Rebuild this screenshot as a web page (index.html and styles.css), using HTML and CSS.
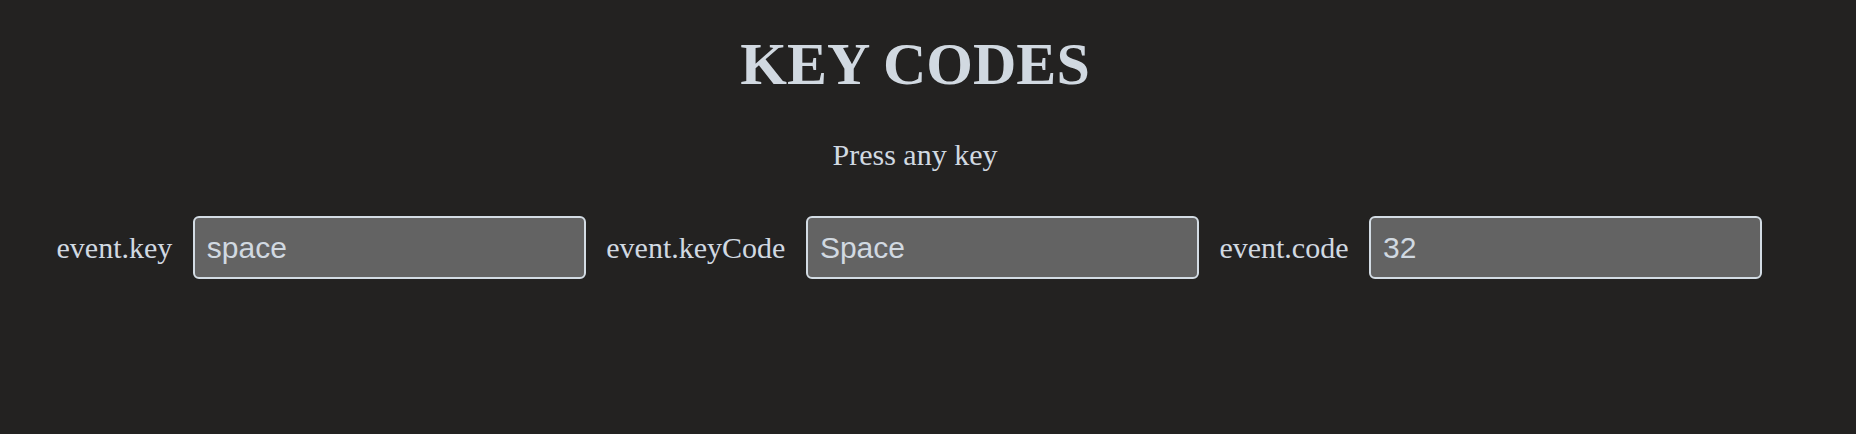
FILE: index.html
```html
<!DOCTYPE html>
<html lang="en">
<head>
<meta charset="utf-8">
<title>Key Codes</title>
<link rel="stylesheet" href="styles.css">
</head>
<body>
<main class="page">
  <h1 class="title">KEY CODES</h1>
  <p class="hint">Press any key</p>
  <div class="fields">
    <label class="field-label" for="k">event.key</label>
    <input class="field-input" id="k" type="text" value="space">
    <label class="field-label" for="kc">event.keyCode</label>
    <input class="field-input" id="kc" type="text" value="Space">
    <label class="field-label" for="c">event.code</label>
    <input class="field-input" id="c" type="text" value="32">
  </div>
</main>
</body>
</html>
```
FILE: styles.css
```css
html, body {
  margin: 0;
  padding: 0;
  background: #232221;
  height: 100%;
}
.page {
  box-sizing: border-box;
  padding: 34px 26px 0 0;
  color: #d1d9e1;
  font-family: "Liberation Serif", "Times New Roman", serif;
}
.title {
  margin: 0;
  text-align: center;
  font-size: 60px;
  line-height: 60px;
  font-weight: bold;
  color: #d1d9e1;
}
.hint {
  margin: 46px 0 0;
  text-align: center;
  font-size: 30px;
  line-height: 30px;
}
.fields {
  display: flex;
  align-items: center;
  gap: 20.5px;
  margin-top: 46px;
  padding-left: 56.5px;
}
.field-label {
  font-size: 30px;
  line-height: normal;
  color: #d1d9e1;
}
.field-input {
  box-sizing: border-box;
  width: 393px;
  height: 63px;
  margin: 0;
  padding: 0 12px;
  border: 2px solid #d3dce4;
  border-radius: 6px;
  background: #636363;
  color: #d1d9e1;
  font-family: "Liberation Sans", Arial, sans-serif;
  font-size: 30px;
  outline: none;
}
```
